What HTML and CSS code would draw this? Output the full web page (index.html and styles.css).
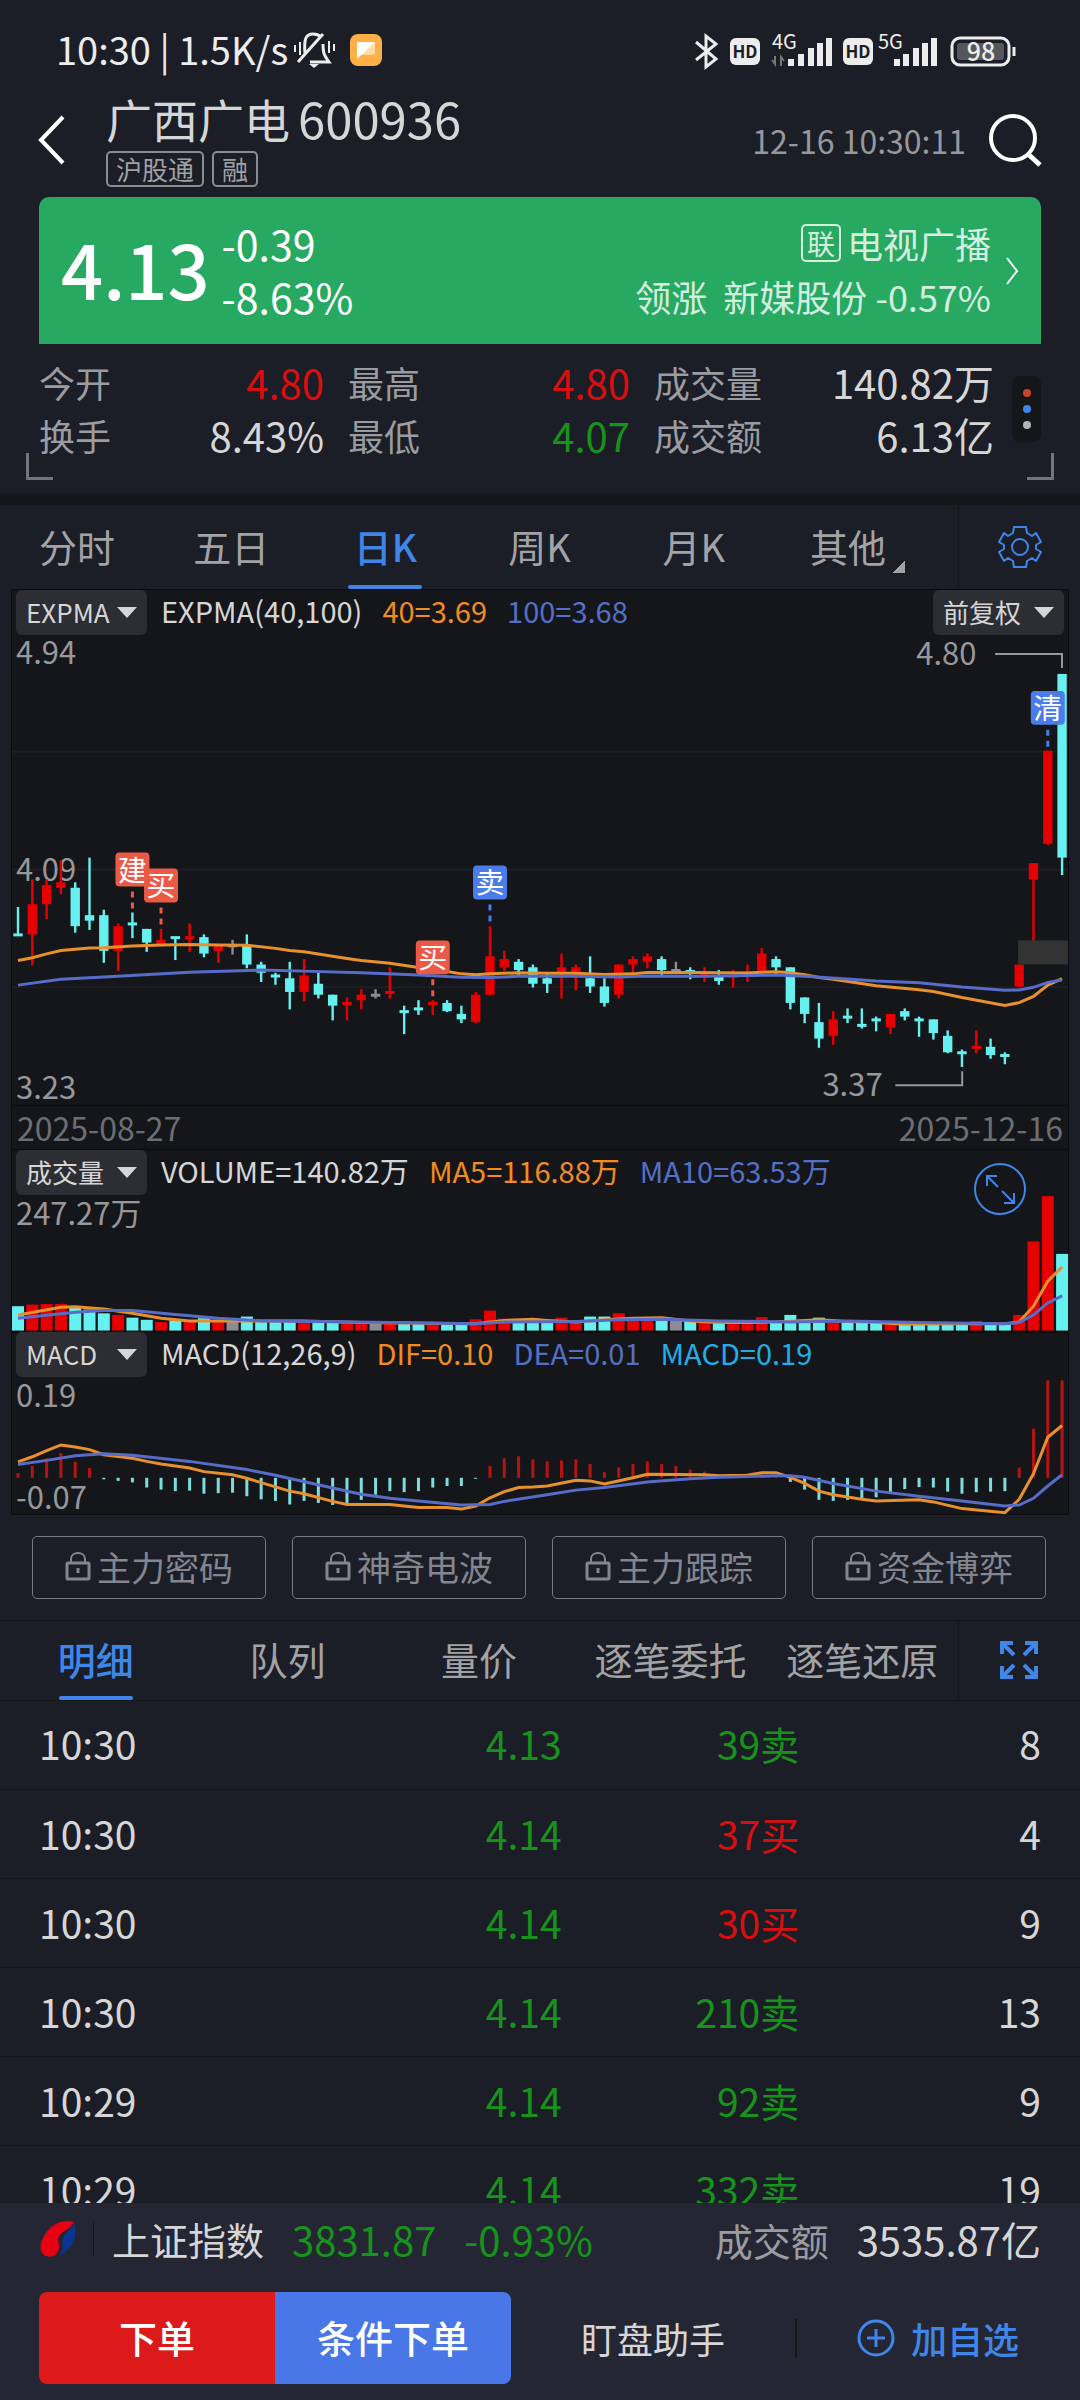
FILE: index.html
```html
<!DOCTYPE html>
<html lang="zh-CN">

<head>
    <meta charset="UTF-8">
    <meta name="viewport" content="width=device-width, initial-scale=1.0">
    <title>广西广电 600936</title>
    <link rel="stylesheet" href="styles.css">
</head>

<body>
    <div class="status-bar">
        <span class="status-text">10:30 | 1.5K/s</span>
        <svg class="bell" width="44" height="38" viewBox="0 0 44 38" fill="none" stroke="#ececec" stroke-width="3">
            <path d="M13 23C12 9 13 3 21 3c4 0 6 1 8 3M31 13c0 9 1 11 6 18H18M6 31L31 3" />
            <path d="M8 11v13M3 14v7M37 10v12M42 13v7" stroke-width="2" />
            <path d="M17 33h10l-5 4z" fill="#ececec" stroke="none" />
        </svg>
        <svg width="32" height="32" viewBox="0 0 32 32">
            <rect width="32" height="32" rx="8" fill="#fdb046" />
            <path d="M7 8h18v9q0 4-4 4H10z" fill="#ffdca6" />
            <path d="M7 8h18L7 25z" fill="#fff" />
        </svg>
        <span class="spacer"></span>
        <svg width="328" height="44" viewBox="0 0 328 44">
            <path d="M4 14l20 17-10 8V8l10 8L4 32" fill="none" stroke="#ececec" stroke-width="3" />
            <rect x="38" y="10" width="30" height="27" rx="6" fill="#ececec" />
            <text x="53" y="30" class="hd">HD</text>
            <text x="80" y="21" class="gen">4G</text>
            <path d="M83 28v8l-3-4M89 38v-9l3 4" fill="none" stroke="#777" stroke-width="2" />
            <path d="M99 31v7M109 26v12M119 20v18M128 15v23M137 10v28" stroke="#ececec" stroke-width="6" />
            <rect x="151" y="10" width="30" height="27" rx="6" fill="#ececec" />
            <text x="166" y="30" class="hd">HD</text>
            <text x="186" y="21" class="gen">5G</text>
            <path d="M205 31v7M214 26v12M224 20v18M233 15v23M242 10v28" stroke="#ececec" stroke-width="6" />
            <rect x="260" y="10" width="57" height="27" rx="8" fill="none" stroke="#ececec" stroke-width="3" />
            <rect x="265" y="15" width="47" height="17" rx="3" fill="#56575c" />
            <path d="M322 19v9" stroke="#ececec" stroke-width="3" />
            <text x="289" y="33" class="level">98</text>
        </svg>
    </div>

    <header class="header">
        <button class="icon-btn" aria-label="返回">
            <svg width="28" height="50" viewBox="0 0 28 50" fill="none" stroke="#fff" stroke-width="4">
                <path d="M25 2L3 25l22 23" />
            </svg>
        </button>
        <div class="title">
            <h1>广西广电 <span>600936</span></h1>
            <div class="tags"><span>沪股通</span><span>融</span></div>
        </div>
        <time>12-16 10:30:11</time>
        <button class="icon-btn" aria-label="搜索">
            <svg width="54" height="54" viewBox="0 0 54 54" fill="none" stroke="#fff" stroke-width="4">
                <circle cx="25" cy="25" r="22" />
                <path d="M40 41l12 11" stroke-width="5" />
            </svg>
        </button>
    </header>

    <section class="quote">
        <div class="price">4.13</div>
        <div class="change">-0.39<br>-8.63%</div>
        <a class="sector" href="#">
            <span class="sector-name"><b>联</b>电视广播</span>
            <span>领涨&nbsp; 新媒股份 -0.57%</span>
        </a>
        <svg width="14" height="28" viewBox="0 0 14 28" fill="none" stroke="#fff" stroke-width="2">
            <path d="M2 1l10 13L2 27" />
        </svg>
    </section>

    <section class="stats">
        <dl>
            <div><dt>今开</dt><dd class="red">4.80</dd></div>
            <div><dt>最高</dt><dd class="red">4.80</dd></div>
            <div><dt>成交量</dt><dd>140.82万</dd></div>
            <div><dt>换手</dt><dd>8.43%</dd></div>
            <div><dt>最低</dt><dd class="green">4.07</dd></div>
            <div><dt>成交额</dt><dd>6.13亿</dd></div>
        </dl>
        <button class="more" aria-label="更多"><i></i><i></i><i></i></button>
    </section>

    <nav class="tabs">
        <button>分时</button>
        <button>五日</button>
        <button class="active">日K</button>
        <button>周K</button>
        <button>月K</button>
        <button class="other">其他</button>
        <button class="tool settings" aria-label="设置">
            <svg width="44" height="44" viewBox="0 0 44 44" fill="none" stroke="#3f86e8" stroke-width="2" stroke-linejoin="round">
                <path d="M16 2h12l1 6 5 3 4-3 5 9-5 3v4l5 3-5 9-4-3-5 3-1 6H16l-1-6-5-3-4 3-5-9 5-3v-4l-5-3 5-9 4 3 5-3z" />
                <circle cx="22" cy="22" r="8" />
            </svg>
        </button>
    </nav>

    <section class="charts">
        <div class="bar">
            <label class="pick"><select aria-label="主图指标"><option>EXPMA</option></select></label>
            <span>EXPMA(40,100)</span>
            <span class="orange">40=3.69</span>
            <span class="blue">100=3.68</span>
            <label class="pick right"><select aria-label="复权"><option>前复权</option></select></label>
        </div>
        <svg id="kline" viewBox="0 0 1058 472"></svg>
        <div class="dates"><span>2025-08-27</span><span>2025-12-16</span></div>
        <div class="bar">
            <label class="pick"><select aria-label="副图一"><option>成交量</option></select></label>
            <span>VOLUME=140.82万</span>
            <span class="orange">MA5=116.88万</span>
            <span class="blue">MA10=63.53万</span>
            <button class="enlarge" aria-label="放大">
                <svg width="54" height="54" viewBox="0 0 54 54" fill="none" stroke="#3f86e8" stroke-width="2">
                    <circle cx="27" cy="27" r="25" />
                    <path d="M25 25L14 14M14 24V14h10M29 29l12 12M41 31v10H31" />
                </svg>
            </button>
        </div>
        <svg id="volume" viewBox="0 0 1058 138"></svg>
        <div class="bar">
            <label class="pick"><select aria-label="副图二"><option>MACD</option></select></label>
            <span>MACD(12,26,9)</span>
            <span class="orange">DIF=0.10</span>
            <span class="blue">DEA=0.01</span>
            <span class="sky">MACD=0.19</span>
        </div>
        <svg id="macd" viewBox="0 0 1058 138"></svg>
    </section>

    <svg class="defs">
        <symbol id="lock" viewBox="0 0 26 30">
            <path d="M6 12V8c0-8 14-8 14 0v4" fill="none" stroke="#83868f" stroke-width="2" />
            <rect x="2" y="12" width="22" height="16" rx="1" fill="none" stroke="#83868f" stroke-width="3" />
            <path d="M13 17v5" stroke="#83868f" stroke-width="3" />
        </symbol>
    </svg>
    <div class="locked">
        <button><svg><use href="#lock" /></svg>主力密码</button>
        <button><svg><use href="#lock" /></svg>神奇电波</button>
        <button><svg><use href="#lock" /></svg>主力跟踪</button>
        <button><svg><use href="#lock" /></svg>资金博弈</button>
    </div>

    <nav class="tabs detail-tabs">
        <button class="active">明细</button>
        <button>队列</button>
        <button>量价</button>
        <button>逐笔委托</button>
        <button>逐笔还原</button>
        <button class="tool" aria-label="全屏">
            <svg width="38" height="38" viewBox="0 0 38 38" fill="none" stroke="#3f86e8" stroke-width="4">
                <path d="M2 13V2h11M3 3l11 11M25 2h11v11M35 3L24 14M2 25v11h11M3 35l11-11M25 36h11V25M35 35L24 24" />
            </svg>
        </button>
    </nav>

    <main class="ticks">
        <table>
            <tr><td>10:30</td><td class="green">4.13</td><td class="green">39卖</td><td>8</td></tr>
            <tr><td>10:30</td><td class="green">4.14</td><td class="red">37买</td><td>4</td></tr>
            <tr><td>10:30</td><td class="green">4.14</td><td class="red">30买</td><td>9</td></tr>
            <tr><td>10:30</td><td class="green">4.14</td><td class="green">210卖</td><td>13</td></tr>
            <tr><td>10:29</td><td class="green">4.14</td><td class="green">92卖</td><td>9</td></tr>
            <tr><td>10:29</td><td class="green">4.14</td><td class="green">332卖</td><td>19</td></tr>
        </table>
    </main>

    <footer>
        <div class="index">
            <svg width="38" height="38" viewBox="0 0 38 38">
                <path d="M35 2C20-2 8 8 3 20c-6 16 8 20 14 14 8-8-3-14 6-21 5-4 10-6 12-11z" fill="#e60012" />
                <path d="M35 3c4 12 1 24-15 33 7-8 1-14 5-20 3-5 8-7 10-13z" fill="#0b3390" />
            </svg>
            <span class="index-name">上证指数</span>
            <span class="num green">3831.87</span>
            <span class="num green">-0.93%</span>
            <span class="turnover">成交额</span>
            <span class="num">3535.87亿</span>
        </div>
        <div class="actions">
            <div class="order">
                <button class="sell">下单</button>
                <button class="cond">条件下单</button>
            </div>
            <button class="assist">盯盘助手</button>
            <button class="add">
                <svg width="38" height="38" viewBox="0 0 38 38" fill="none" stroke="#3f86e8" stroke-width="3">
                    <circle cx="19" cy="19" r="17" />
                    <path d="M19 10v18M10 19h18" />
                </svg>
                加自选
            </button>
        </div>
    </footer>

    <script src="chart.js"></script>
</body>

</html>
```
FILE: styles.css
```css
* {
    box-sizing: border-box;
}

body {
    display: flex;
    flex-direction: column;
    height: 100vh;
    margin: 0;
    overflow: hidden;
    background: #1b1e27;
    color: #d6d6d6;
    font-family: "Noto Sans CJK SC", sans-serif;
    font-size: 38px;
}

button {
    padding: 0;
    border: none;
    background: none;
    color: inherit;
    font: inherit;
    cursor: pointer;
}

svg {
    display: block;
    flex-shrink: 0;
    overflow: visible;
}

.red {
    color: #d90f0f;
}

.green {
    color: #17931c;
}

.orange {
    color: #f28c1e;
}

.blue {
    color: #5470c6;
}

.sky {
    color: #22aee6;
}

/* Status bar */
.status-bar {
    display: flex;
    align-items: center;
    height: 99px;
    padding: 0 60px 0 56px;
    color: #ececec;
}

.status-text {
    line-height: 40px;
    padding-bottom: 2px;
}

.bell {
    margin: 0 14px 0 4px;
}

.spacer {
    flex: 1;
}

.hd {
    font-size: 17px;
    font-weight: 700;
    text-anchor: middle;
    fill: #1b1e27;
}

.gen {
    font-size: 20px;
    fill: #ececec;
}

.level {
    font-size: 25px;
    font-weight: 500;
    text-anchor: middle;
    fill: #ececec;
}

/* Header */
.header {
    display: flex;
    align-items: center;
    height: 98px;
    padding: 0 38px 16px;
}

.title {
    flex: 1;
    margin-left: 40px;
}

h1 {
    display: flex;
    align-items: center;
    gap: 8px;
    margin: 0;
    font-size: 46px;
    font-weight: 400;
    line-height: 50px;
}

h1 span {
    font-size: 49px;
}

.tags {
    display: flex;
    gap: 8px;
    margin-top: 8px;
    color: #a0a1a5;
    font-size: 26px;
    line-height: 32px;
}

.tags span {
    padding: 0 8px;
    border: 2px solid #8b8c91;
    border-radius: 5px;
}

time {
    margin-right: 22px;
    color: #97989c;
    font-size: 32px;
}

/* Quote card */
.quote {
    display: flex;
    align-items: center;
    height: 147px;
    margin: 0 39px;
    padding: 0 22px;
    border-radius: 10px 10px 0 0;
    background: #27a962;
    color: #fff;
}

.price {
    padding-bottom: 6px;
    font-size: 74px;
    font-weight: 500;
}

.change {
    flex: 1;
    margin-left: 12px;
    padding-bottom: 2px;
    font-size: 41px;
    line-height: 53px;
}

.sector {
    display: flex;
    flex-direction: column;
    align-items: flex-end;
    margin-right: 14px;
    padding-bottom: 2px;
    color: #d4eee0;
    font-size: 36px;
    line-height: 53px;
    text-decoration: none;
}

.sector-name {
    display: flex;
    align-items: center;
    gap: 6px;
}

.sector b {
    padding: 0 4px;
    border: 2px solid #d4eee0;
    border-radius: 5px;
    font-size: 28px;
    font-weight: 400;
    line-height: 34px;
}

/* Stats */
.stats {
    position: relative;
    display: flex;
    align-items: center;
    gap: 18px;
    height: 161px;
    padding: 0 39px 20px;
    border-bottom: 11px solid #15161a;
}

.stats::before,
.stats::after {
    content: "";
    position: absolute;
    bottom: 14px;
    width: 24px;
    height: 24px;
    border: solid #73757b;
    border-width: 0 0 3px 3px;
}

.stats::before {
    left: 26px;
}

.stats::after {
    right: 26px;
    border-width: 0 3px 3px 0;
}

dl {
    flex: 1;
    display: grid;
    grid-template-columns: 285fr 282fr 340fr;
    column-gap: 24px;
    margin: 0;
    line-height: 53px;
}

dl div {
    display: flex;
    justify-content: space-between;
}

dt {
    color: #9b9ca0;
    font-size: 36px;
}

dd {
    margin: 0;
    font-size: 40px;
}

.more {
    display: flex;
    flex-direction: column;
    align-items: center;
    justify-content: center;
    gap: 8px;
    width: 29px;
    height: 66px;
    border-radius: 8px;
    background: #15161a;
}

.more i {
    width: 8px;
    height: 8px;
    border-radius: 50%;
    background: #c8432f;
}

.more i:nth-child(2) {
    background: #3f86e8;
}

.more i:nth-child(3) {
    background: #b4b4b4;
}

/* Tabs */
.tabs {
    display: flex;
    height: 84px;
    flex-shrink: 0;
    color: #a3a3a5;
}

.tabs button {
    position: relative;
    flex: 1;
    padding-bottom: 3px;
}

.tabs .active {
    color: #3f86e8;
    font-weight: 500;
}

.tabs .active::after {
    content: "";
    position: absolute;
    bottom: 0;
    left: 50%;
    width: 74px;
    height: 4px;
    margin-left: -37px;
    border-radius: 2px;
    background: #3f86e8;
}

.tabs .other::after {
    content: "";
    position: absolute;
    right: 20px;
    bottom: 16px;
    width: 12px;
    height: 12px;
    background: linear-gradient(135deg, transparent 50%, #a3a3a5 50%);
}

.tabs .tool {
    display: flex;
    flex: 0 0 122px;
    align-items: center;
    justify-content: center;
    padding: 0;
    border-left: 1px solid #15161a;
}

.tabs .settings {
    margin-left: 33px;
}

/* Charts */
.charts {
    margin: 0 11px;
    border: 1px solid #0b0c0f;
    background: #15161a;
}

.charts > svg {
    width: 100%;
}

.bar {
    position: relative;
    display: flex;
    gap: 20px;
    height: 44px;
    padding: 0 4px;
    font-size: 29px;
    line-height: 40px;
}

.pick {
    position: relative;
    width: 131px;
    margin-right: -6px;
}

.pick select {
    width: 100%;
    height: 45px;
    padding: 0 0 2px 10px;
    border: none;
    border-radius: 6px;
    appearance: none;
    background: #2d2e33;
    color: #d6d6d6;
    font-family: inherit;
    font-size: 26px;
}

.pick::after {
    content: "";
    position: absolute;
    top: 17px;
    right: 10px;
    border: 10px solid transparent;
    border-top: 11px solid #d6d6d6;
    border-bottom: none;
}

.right {
    margin: 0 0 0 auto;
}

.enlarge {
    position: absolute;
    top: 12px;
    right: 41px;
}

.dates {
    display: flex;
    justify-content: space-between;
    height: 45px;
    padding: 0 5px;
    border: solid #0b0c0f;
    border-width: 1px 0;
    color: #6d6e72;
    font-size: 32px;
    line-height: 42px;
}

.axis {
    fill: #97989c;
    font-size: 31px;
}

.mark {
    fill: #fff;
    font-size: 29px;
    text-anchor: middle;
}

/* Locked indicators */
.defs {
    position: absolute;
    width: 0;
    height: 0;
}

.locked {
    display: flex;
    gap: 26px;
    padding: 21px 34px 21px 32px;
    border-bottom: 1px solid #15161a;
}

.locked button {
    display: flex;
    flex: 1;
    align-items: center;
    justify-content: center;
    gap: 6px;
    height: 63px;
    padding-bottom: 2px;
    border: 1px solid #777a85;
    border-radius: 5px;
    color: #83868f;
    font-size: 34px;
}

.locked svg {
    width: 26px;
    height: 30px;
}

.detail-tabs {
    height: 80px;
    border-bottom: 1px solid #15161a;
}

/* Tick list */
.ticks {
    flex: 1;
    min-height: 0;
    overflow: hidden;
}

table {
    width: 100%;
    border-collapse: collapse;
    font-size: 39px;
}

td {
    width: 22%;
    height: 89px;
    padding: 0 0 3px;
    border-bottom: 1px solid #15161a;
    text-align: right;
}

td:first-child {
    width: 24%;
    padding-left: 39px;
    text-align: left;
}

td:nth-child(2) {
    width: 28%;
}

td:last-child {
    width: 26%;
    padding-right: 39px;
}

/* Footer */
footer {
    flex-shrink: 0;
    height: 197px;
    padding: 0 39px;
    background: #242733;
}

.index {
    display: flex;
    align-items: center;
    gap: 28px;
    height: 74px;
    padding-bottom: 2px;
}

.index-name {
    margin-left: -12px;
    padding-left: 18px;
    border-left: 1px solid #15161a;
    line-height: 34px;
}

.num {
    font-size: 40px;
}

.turnover {
    margin-left: auto;
    color: #9b9ca0;
}

.actions {
    display: flex;
    align-items: center;
    margin-top: 15px;
    font-size: 36px;
}

.order {
    display: flex;
    flex: 0 0 472px;
    height: 92px;
    overflow: hidden;
    border-radius: 8px;
    color: #fff;
    font-size: 38px;
    font-weight: 500;
}

.order button {
    flex: 1;
    padding-bottom: 3px;
}

.sell {
    background: #dc1a1a;
}

.cond {
    background: #4a77e8;
}

.assist {
    flex: 1;
    border-right: 2px solid #15161a;
    line-height: 38px;
}

.add {
    display: flex;
    align-items: center;
    justify-content: center;
    gap: 16px;
    flex: 0 0 244px;
    padding-left: 38px;
    color: #3f86e8;
    font-weight: 500;
}
```
FILE: chart.js
```js
const RED = "#e60000", CYAN = "#66f0f0", GRAY = "#8b8c98", ORANGE = "#e8912c", BLUE = "#566cc8";

// high, body top, body bottom, low (in cents) and colour
const candles = `395 385 385 385 c,405 396 385 374 r,405 403 396 391 r,412 404 402 400 r,404 402 388 386 c,413 392 390 387 c
394 392 379 375 c,389 388 379 372 r,393 389 389 384 c,387 387 382 379 c,387 383 381 381 r,384 384 384 376 c,389 384 384 379 r
385 384 378 377 c,381 381 379 375 r,383 381 381 378 g,385 381 374 373 c,375 374 371 368 c,371 370 370 367 c,375 369 364 358 c
376 370 364 361 r,371 367 363 362 c,363 363 359 354 c,362 360 360 354 r,365 363 361 358 r,365 363 363 362 g,373 364 364 362 r
359 357 357 349 c,361 358 358 356 c,361 360 360 356 r,361 360 357 357 c,359 356 354 353 c,364 363 353 353 r,388 377 363 363 r
379 376 373 372 r,376 375 372 370 c,374 373 367 366 c,371 369 367 364 c,378 373 371 362 r,374 373 371 365 r,377 369 366 364 c
369 366 360 359 c,374 374 363 362 r,377 376 374 371 r,378 377 375 373 r,377 376 372 370 c,375 372 372 372 g,373 372 371 369 c
373 371 371 368 r,372 370 368 367 c,372 370 370 366 r,374 371 371 368 r,380 378 371 371 r,377 376 373 371 c,373 373 360 358 c
362 362 356 353 c,360 353 347 344 c,357 354 348 345 r,358 355 355 353 c,358 352 352 351 c,355 354 354 350 c,356 356 351 349 r
358 357 355 354 c,355 354 354 348 c,354 354 349 347 c,350 348 342 342 c,343 342 342 337 c,350 344 344 342 r,347 344 341 340 c
342 341 341 338 c,374 374 366 366 r,411 411 405 383 r,452 452 418 418 r,480 480 413 407 c`.split(/[,\n]/).map(s => s.split(" "));

const volumes = [45, 48, 49, 49, 43, 39, 32, 29, 24, 20, 16, 19, 19, 23, 19, 16, 26, 18, 16, 18, 18, 16, 15, 15, 15, 15, 16, 17, 15,
    13, 13, 13, 21, 37, 22, 19, 19, 18, 24, 18, 26, 26, 32, 21, 21, 19, 18, 17, 15, 15, 14, 15, 25, 17, 29, 19, 24, 18, 16, 16, 15,
    15, 13, 13, 12, 12, 12, 18, 12, 12, 29, 164, 247, 141];

const hist = [9, 23, 38, 48, 31, 19, -3, -6, -9, -19, -23, -26, -25, -31, -30, -29, -36, -42, -45, -52, -45, -49, -53, -51, -43, -33,
    -26, -28, -26, -19, -16, -16, -2, 23, 38, 42, 36, 32, 34, 36, 27, 11, 20, 27, 32, 27, 23, 16, 12, 5, 1, 1, 6, 5, -8, -23, -43,
    -45, -43, -40, -38, -29, -22, -18, -19, -27, -31, -28, -27, -26, 20, 96, 190, 190];

// lines are "day:value" pairs
const ema40 = "0:375.5 1:376.5 2:377.9 3:379.1 5:380 6:380.1 8:380.8 10:381.1 12:381.3 14:381.1 16:381 18:379.9 19:379.1 20:378.7 22:377 23:376.2 24:375.5 26:374.5 28:372.9 30:371.5 31:370.6 32:370.3 33:370.6 35:371 37:370.8 39:370.8 41:370.4 43:370.6 44:371.1 47:371.1 51:370.9 52:371.2 53:371.4 54:371 55:370.3 56:369.3 57:368.6 60:366.3 63:364.8 64:364.2 65:363.1 66:362 69:359.1 70:360.1 71:362.4 72:366.5 73:368.9";
const ema100 = "0:366.5 3:368.6 6:369.5 12:371.2 17:372 20:371.6 24:371 28:370.2 31:369.4 33:369.3 35:369.7 39:369.7 42:369.5 44:369.8 48:369.7 53:370.2 55:369.7 58:368.7 60:368 63:367.4 66:365.8 69:364.6 70:364.7 71:365.7 72:367.5 73:368.4";
const ma5 = "0:29 3:43 4:44 6:40 8:32 10:23 12:18 16:18 20:18 24:15 32:13 33:16 34:19 36:21 37:19 39:16 41:20 43:23 45:24 47:18 49:15 51:15 53:16 56:20 58:17 60:15 62:12 66:13 69:13 70:16 71:45 72:91 73:117";
const ma10 = "0:23 4:34 6:37 8:37 11:30 14:23 17:18 21:17 26:15 32:13 34:16 39:17 42:20 45:21 49:18 54:16 58:18 63:15 69:13 70:15 71:29 72:51 73:64";
const dif = "0:31 1:41 2:53 3:64 4:60 5:55 6:45 8:38 9:32 10:27 12:19 13:12 15:6 16:-1 19:-26 20:-31 22:-46 23:-52 26:-52 28:-58 30:-58 31:-61 32:-55 33:-39 34:-27 35:-19 36:-18 37:-16 39:-5 40:-6 41:-12 43:0 44:7 48:6 49:4 51:5 52:10 53:10 54:1 55:-11 56:-26 57:-33 59:-42 60:-45 63:-43 64:-47 66:-60 69:-68 70:-42 71:8 72:79 73:102";
const dea = "0:26 2:34 4:43 6:47 8:44 12:32 16:16 18:5 22:-20 24:-32 26:-40 28:-45 31:-53 33:-52 34:-46 37:-33 39:-24 41:-19 44:-8 47:-2 49:1 53:4 54:4 55:1 57:-11 60:-26 63:-36 66:-45 69:-55 70:-53 71:-40 72:-16 73:6";

const x = i => 6 + i * 14.33;
const rect = (cx, y, w, h, fill) => `<rect x="${cx - w / 2}" y="${y}" width="${w}" height="${h}" fill="${fill}"/>`;
const path = (d, color) => `<path d="${d}" fill="none" stroke="${color}" stroke-width="2"/>`;
const text = (tx, ty, s) => `<text class="axis" x="${tx}" y="${ty}">${s}</text>`;

function line(data, y, color) {
    const points = data.split(" ").map(p => {
        const [i, v] = p.split(":");
        return x(+i) + "," + y(+v);
    });
    return `<polyline points="${points.join(" ")}" fill="none" stroke="${color}" stroke-width="3"/>`;
}

function colorOf(i) {
    return { r: RED, c: CYAN, g: GRAY }[candles[i][4]];
}

function marker(cx, top, s, color) {
    return `<rect x="${cx - 17}" y="${top}" width="34" height="34" rx="4" fill="${color}"/>` +
        `<text class="mark" x="${cx}" y="${top + 28}">${s}</text>` +
        `<path d="M${cx} ${top + 39}v18" stroke="${color}" stroke-width="3" stroke-dasharray="6 5"/>`;
}

function drawKline() {
    const y = p => 40 + (480 - p) * 2.747;
    let out = "";
    for (const g of [118, 236, 354]) out += path(`M0 ${g}H1058`, "#1e1f24");
    out += text(4, 30, "4.94") + text(4, 247, "4.09") + text(4, 466, "3.23");
    candles.forEach(([h, t, b, l], i) => {
        const c = colorOf(i);
        out += rect(x(i), y(h), 2.4, y(l) - y(h) + 1, c);
        out += t === b ? rect(x(i), y(t) - 1, 9.4, 3, c) : rect(x(i), y(t), 9.4, y(b) - y(t), c);
    });
    out += rect(1033, 307, 50, 24, "#333333");
    out += line(ema40, y, ORANGE) + line(ema100, y, BLUE);
    out += text(906, 31, "4.80") + path("M985 20H1052V34", "#97989c");
    out += text(812, 463, "3.37") + path("M885 452H952V438", "#97989c");
    out += marker(x(8), 219, "建", "#ea5a47") + marker(x(10), 235, "买", "#ea5a47") + marker(x(29), 307, "买", "#ea5a47");
    out += marker(x(33), 232, "卖", "#4a7ceb") + marker(x(72), 57, "清", "#4a7ceb");
    document.getElementById("kline").innerHTML = out;
}

function drawVolume() {
    const y = v => 137 - v * 0.546;
    let out = volumes.map((v, i) => rect(x(i), y(v), 12, 137 - y(v), colorOf(i))).join("");
    out += line(ma5, y, ORANGE) + line(ma10, y, BLUE) + text(4, 31, "247.27万");
    out += path("M0 138H1058", "#0b0c0f");
    document.getElementById("volume").innerHTML = out;
}

function drawMacd() {
    const y = v => 102 - v * 0.514;
    let out = hist.map((v, i) => rect(x(i), Math.min(102, y(v)), 3, Math.abs(y(v) - 102), v > 0 ? "#b51414" : "#7ddcdc")).join("");
    out += line(dif, y, ORANGE) + line(dea, y, BLUE);
    out += text(4, 31, "0.19") + text(4, 133, "-0.07");
    document.getElementById("macd").innerHTML = out;
}

drawKline();
drawVolume();
drawMacd();
```
